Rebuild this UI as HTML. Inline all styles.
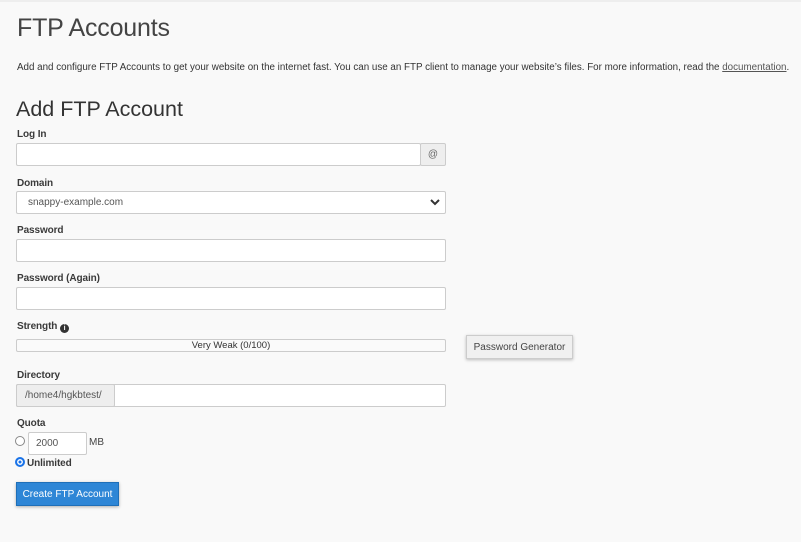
<!DOCTYPE html>
<html><head><style>
body{margin:0;width:801px;height:542px;background:#f9f9f9;font-family:"Liberation Sans",sans-serif;color:#333;position:relative;overflow:hidden}
.a{position:absolute}
.lbl{font-size:10px;font-weight:bold;color:#3a3a3a;letter-spacing:-0.1px}
.in{position:absolute;background:#fff;border:1px solid #ccc;border-radius:2px;box-sizing:border-box}
</style></head><body>
<div class="a" style="left:0;top:0;width:801px;height:2px;background:#eee"></div>
<div class="a" style="left:17px;top:14px;font-size:25px;font-weight:300;color:#444;letter-spacing:-0.2px">FTP Accounts</div>
<div class="a" style="left:17px;top:62px;font-size:9.8px;color:#333;white-space:nowrap">Add and configure FTP Accounts to get your website on the internet fast. You can use an FTP client to manage your website’s files. For more information, read the <span style="text-decoration:underline;color:#555">documentation</span>.</div>
<div class="a" style="left:16px;top:97px;font-size:21.5px;color:#333">Add FTP Account</div>
<div class="a lbl" style="left:17px;top:129px">Log In</div>
<div class="in" style="left:16px;top:143px;width:405px;height:23px"></div>
<div class="in" style="left:420px;top:143px;width:26px;height:23px;background:#eee;font-size:10px;color:#666;text-align:center;line-height:22px">@</div>
<div class="a lbl" style="left:17px;top:178px">Domain</div>
<div class="in" style="left:16px;top:191px;width:430px;height:23px;font-size:10px;color:#555;line-height:22px;padding-left:11px">snappy-example.com
<svg class="a" style="right:5px;top:7px" width="10" height="7" viewBox="0 0 10 7"><path d="M1 1l4 4 4-4" stroke="#333" stroke-width="2" fill="none"/></svg></div>
<div class="a lbl" style="left:17px;top:225px">Password</div>
<div class="in" style="left:16px;top:239px;width:430px;height:23px"></div>
<div class="a lbl" style="left:17px;top:273px">Password (Again)</div>
<div class="in" style="left:16px;top:287px;width:430px;height:23px"></div>
<div class="a lbl" style="left:17px;top:321px">Strength <span style="display:inline-block;width:9px;height:9px;border-radius:50%;background:#333;color:#fff;font-size:7px;text-align:center;line-height:9px;vertical-align:-1px">i</span></div>
<div class="in" style="left:16px;top:339px;width:430px;height:13px;font-size:9.5px;color:#333;text-align:center;line-height:12px;background:#fafafa">Very Weak (0/100)</div>
<div class="a" style="left:466px;top:335px;width:107px;height:24px;box-sizing:border-box;background:#f0f0f0;border:1px solid #ccc;box-shadow:0 1px 3px rgba(0,0,0,.25);font-size:10px;color:#444;text-align:center;line-height:23px">Password Generator</div>
<div class="a lbl" style="left:17px;top:370px">Directory</div>
<div class="in" style="left:16px;top:384px;width:430px;height:23px"></div>
<div class="in" style="left:16px;top:384px;width:99px;height:23px;background:#eee;font-size:10px;color:#555;line-height:22px;padding-left:8px">/home4/hgkbtest/</div>
<div class="a lbl" style="left:17px;top:418px">Quota</div>
<div class="a" style="left:15px;top:436px;width:8px;height:8px;border:1px solid #888;border-radius:50%;background:#fff"></div>
<div class="in" style="left:28px;top:432px;width:59px;height:23px;font-size:10px;color:#555;line-height:22px;padding-left:7px">2000</div>
<div class="a" style="left:89px;top:437px;font-size:10px;color:#444">MB</div>
<div class="a" style="left:15px;top:457px;width:6px;height:6px;border:2px solid #1a73e8;border-radius:50%;background:#1a73e8;box-shadow:inset 0 0 0 1.5px #fff"></div>
<div class="a lbl" style="left:27px;top:458px">Unlimited</div>
<div class="a" style="left:16px;top:482px;width:103px;height:24px;background:#2e86d6;border:1px solid #1f6fb8;box-sizing:border-box;box-shadow:0 1px 3px rgba(0,0,0,.3);color:#fff;font-size:10px;text-align:center;line-height:23px">Create FTP Account</div>
</body></html>
